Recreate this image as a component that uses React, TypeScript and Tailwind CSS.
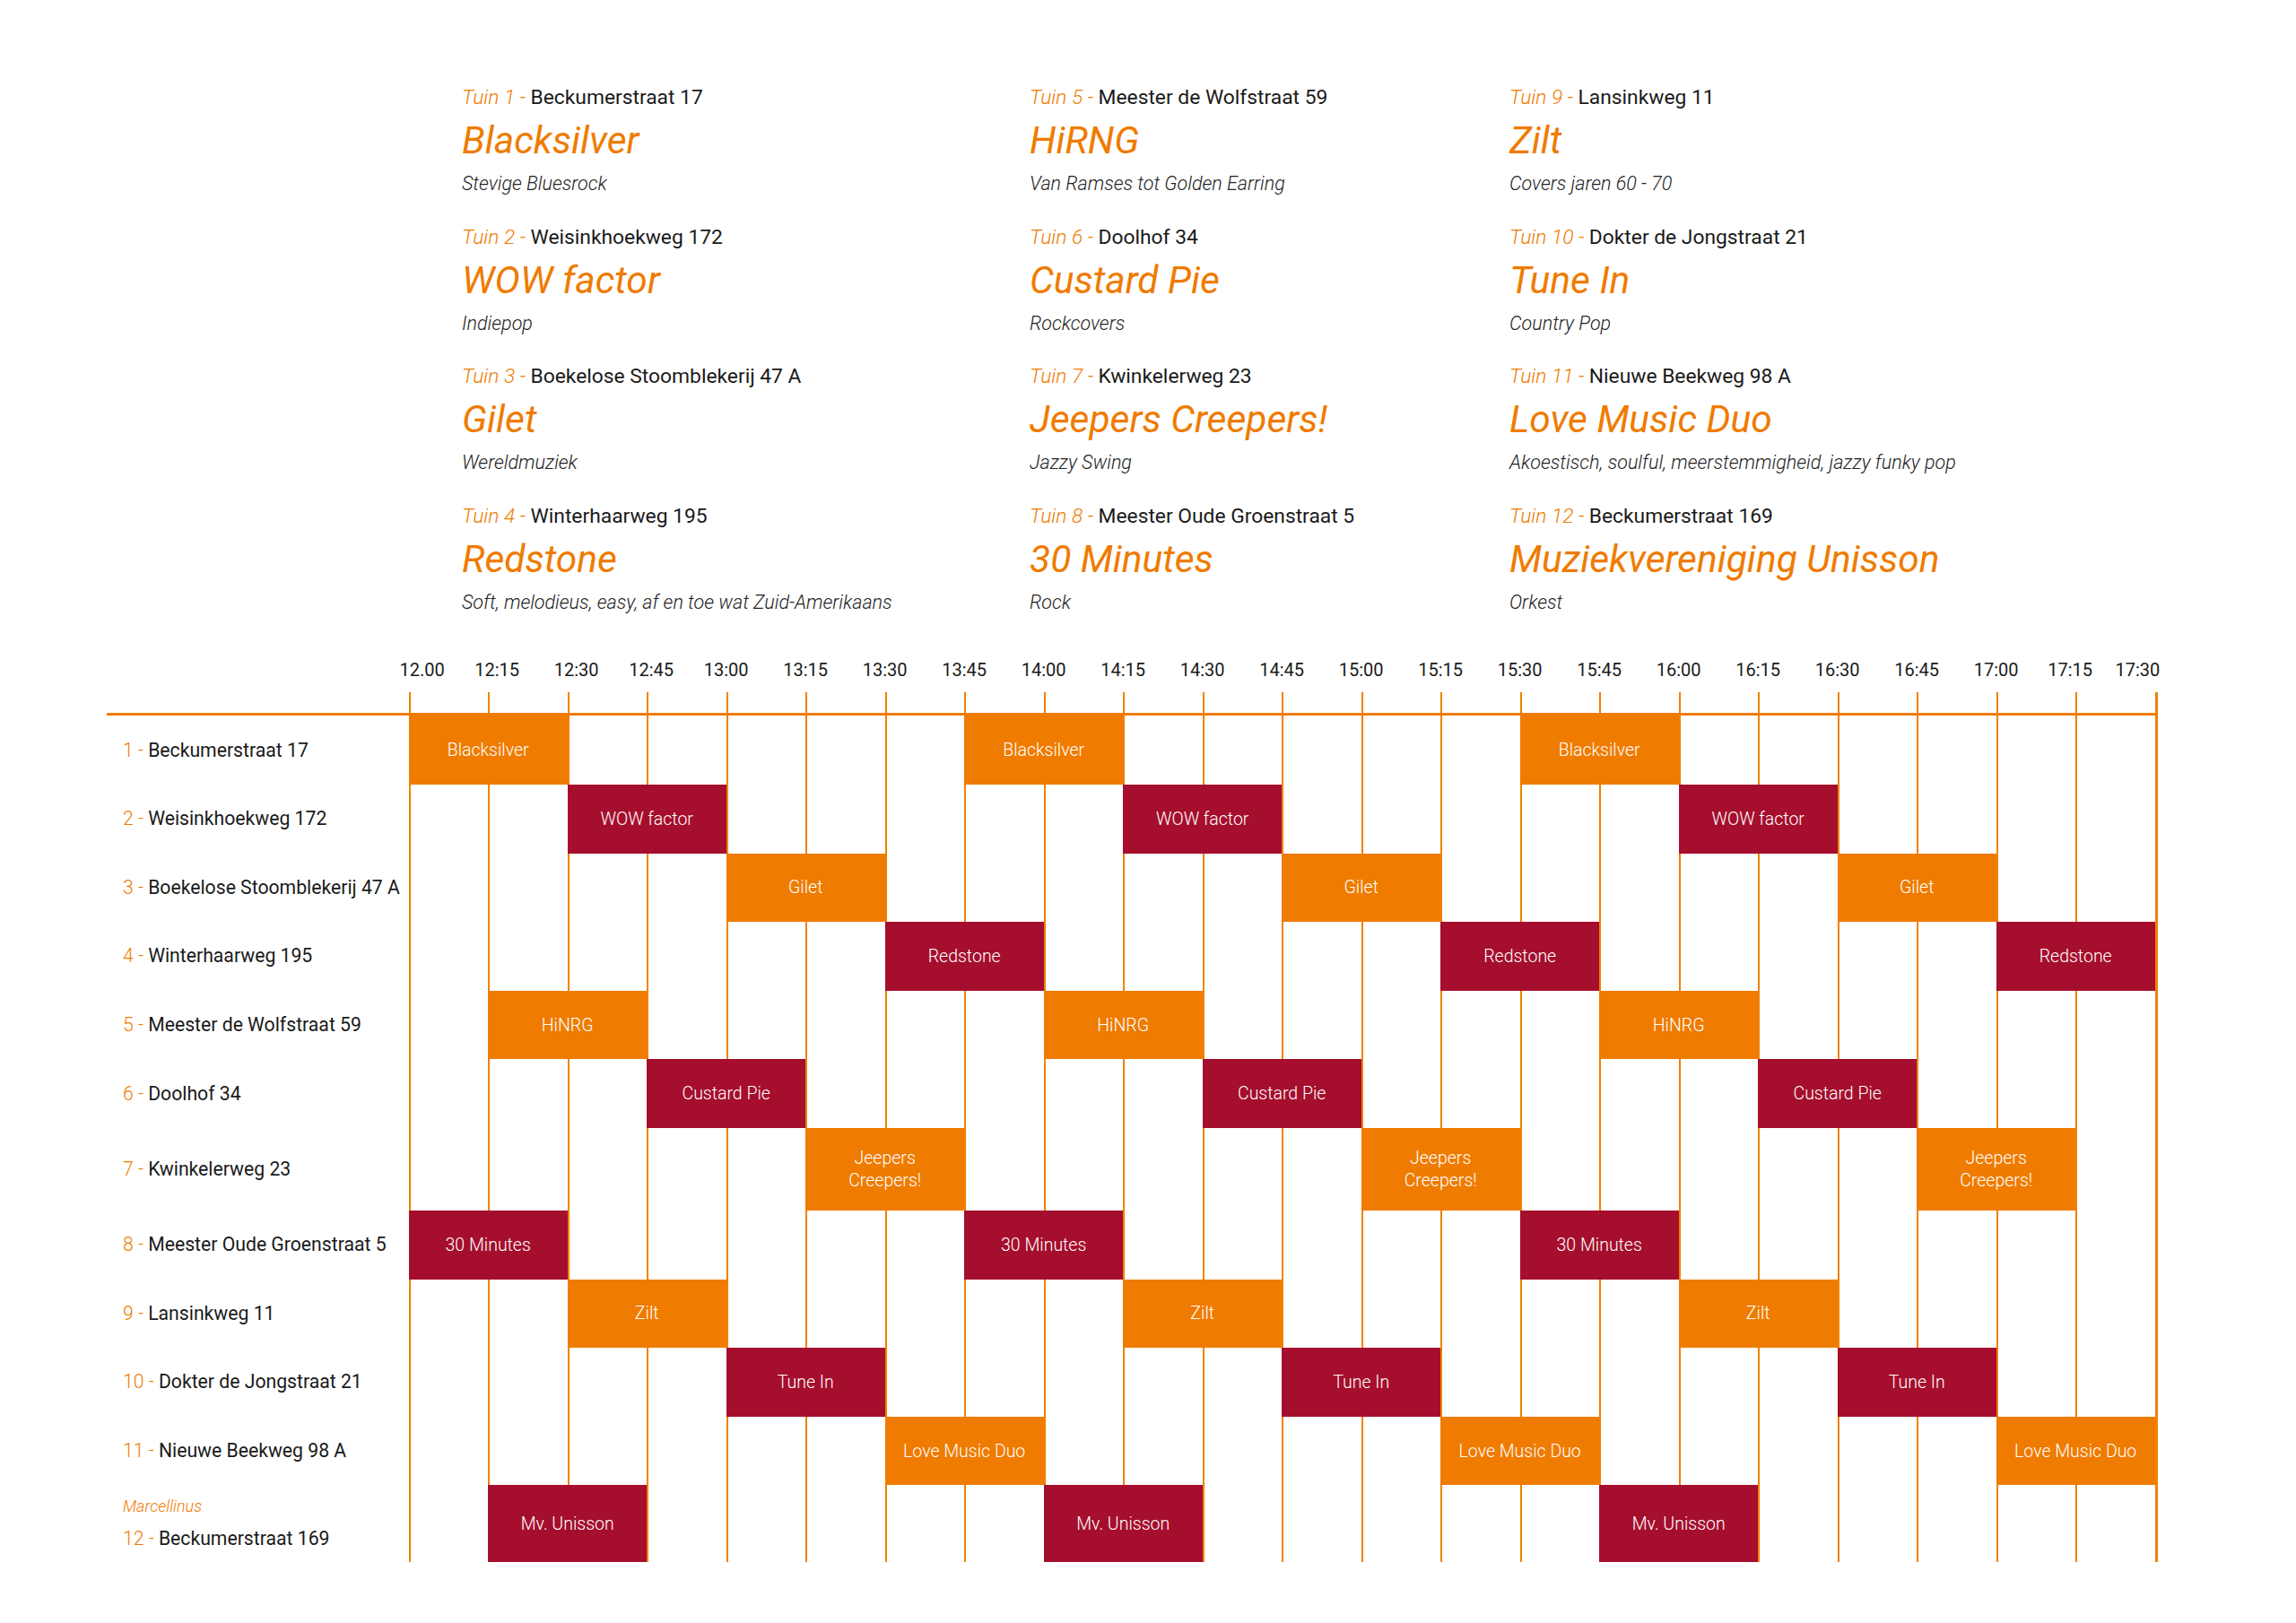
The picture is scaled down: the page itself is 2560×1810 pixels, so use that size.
import React from "react";

const ORANGE = "#EF7B00";

type Entry = { tuin: number; addr: string; name: string; genre: string };

const COLUMNS: Entry[][] = [
  [
    { tuin: 1, addr: "Beckumerstraat 17", name: "Blacksilver", genre: "Stevige Bluesrock" },
    { tuin: 2, addr: "Weisinkhoekweg 172", name: "WOW factor", genre: "Indiepop" },
    { tuin: 3, addr: "Boekelose Stoomblekerij 47 A", name: "Gilet", genre: "Wereldmuziek" },
    { tuin: 4, addr: "Winterhaarweg 195", name: "Redstone", genre: "Soft, melodieus, easy, af en toe wat Zuid-Amerikaans" },
  ],
  [
    { tuin: 5, addr: "Meester de Wolfstraat 59", name: "HiRNG", genre: "Van Ramses tot Golden Earring" },
    { tuin: 6, addr: "Doolhof 34", name: "Custard Pie", genre: "Rockcovers" },
    { tuin: 7, addr: "Kwinkelerweg 23", name: "Jeepers Creepers!", genre: "Jazzy Swing" },
    { tuin: 8, addr: "Meester Oude Groenstraat 5", name: "30 Minutes", genre: "Rock" },
  ],
  [
    { tuin: 9, addr: "Lansinkweg 11", name: "Zilt", genre: "Covers jaren 60 - 70" },
    { tuin: 10, addr: "Dokter de Jongstraat 21", name: "Tune In", genre: "Country Pop" },
    { tuin: 11, addr: "Nieuwe Beekweg 98 A", name: "Love Music Duo", genre: "Akoestisch, soulful, meerstemmigheid, jazzy funky pop" },
    { tuin: 12, addr: "Beckumerstraat 169", name: "Muziekvereniging Unisson", genre: "Orkest" },
  ],
];

const COL_WIDTHS = ["w-[633px]", "w-[535px]", "flex-1"];

type Row = { n: number; addr: string; name: string; red: boolean; starts: number[]; sub?: string; h: string };

const ROWS: Row[] = [
  { n: 1, addr: "Beckumerstraat 17", name: "Blacksilver", red: false, starts: [0, 7, 14], h: "h-[76.6px]" },
  { n: 2, addr: "Weisinkhoekweg 172", name: "WOW factor", red: true, starts: [2, 9, 16], h: "h-[76.6px]" },
  { n: 3, addr: "Boekelose Stoomblekerij 47 A", name: "Gilet", red: false, starts: [4, 11, 18], h: "h-[76.6px]" },
  { n: 4, addr: "Winterhaarweg 195", name: "Redstone", red: true, starts: [6, 13, 20], h: "h-[76.6px]" },
  { n: 5, addr: "Meester de Wolfstraat 59", name: "HiNRG", red: false, starts: [1, 8, 15], h: "h-[76.6px]" },
  { n: 6, addr: "Doolhof 34", name: "Custard Pie", red: true, starts: [3, 10, 17], h: "h-[76.6px]" },
  { n: 7, addr: "Kwinkelerweg 23", name: "Jeepers\nCreepers!", red: false, starts: [5, 12, 19], h: "h-[92px]" },
  { n: 8, addr: "Meester Oude Groenstraat 5", name: "30 Minutes", red: true, starts: [0, 7, 14], h: "h-[76.6px]" },
  { n: 9, addr: "Lansinkweg 11", name: "Zilt", red: false, starts: [2, 9, 16], h: "h-[76.6px]" },
  { n: 10, addr: "Dokter de Jongstraat 21", name: "Tune In", red: true, starts: [4, 11, 18], h: "h-[76.6px]" },
  { n: 11, addr: "Nieuwe Beekweg 98 A", name: "Love Music Duo", red: false, starts: [6, 13, 20], h: "h-[76.6px]" },
  { n: 12, addr: "Beckumerstraat 169", name: "Mv. Unisson", red: true, starts: [1, 8, 15], sub: "Marcellinus", h: "h-[86px]" },
];

const TIMES = [
  "12.00", "12:15", "12:30", "12:45", "13:00", "13:15", "13:30", "13:45", "14:00", "14:15", "14:30", "14:45",
  "15:00", "15:15", "15:30", "15:45", "16:00", "16:15", "16:30", "16:45", "17:00", "17:15", "17:30",
];

// small hand nudges so the labels sit where the print version has them
const TIME_NUDGE: Record<number, string> = {
  0: "pl-[30px]",
  1: "pl-[20px]",
  2: "pl-[20px]",
  3: "pl-[10px]",
  21: "pr-[12px]",
};

function EntryBlock({ e }: { e: Entry }) {
  return (
    <div className="flex flex-col">
      <p className="text-[22.8px] leading-[28px] text-[#1a1a1a] whitespace-nowrap">
        <span className="italic font-light text-[#EF7B00]">Tuin {e.tuin} - </span>
        {e.addr}
      </p>
      <p className="text-[42.5px] leading-[67px] italic text-[#EF7B00] whitespace-nowrap">{e.name}</p>
      <p className="text-[21.5px] leading-[30px] italic font-light text-[#222] whitespace-nowrap">{e.genre}</p>
    </div>
  );
}

function ScheduleRow({ row }: { row: Row }) {
  const cells: React.ReactNode[] = [];
  for (let i = 0; i < 22; i++) {
    if (row.starts.includes(i)) {
      cells.push(
        <div
          key={i}
          className={`col-span-2 flex items-center justify-center text-center whitespace-pre-line text-[19.5px] leading-[25px] font-light text-white ${
            row.red ? "bg-[#A50E2D]" : "bg-[#EF7B00]"
          }`}
        >
          {row.name}
        </div>
      );
      i++;
    } else {
      cells.push(<div key={i} className="border-l-2 border-[#F08200]" />);
    }
  }
  return (
    <div className={`flex ${row.h}`}>
      <div className="flex w-[336.7px] shrink-0 flex-col justify-center pl-[18px]">
        {row.sub && <p className="text-[18px] leading-[24px] italic font-light text-[#EF7B00] mb-[10px]">{row.sub}</p>}
        <p className="text-[21.2px] leading-[28px] text-[#1a1a1a] whitespace-nowrap">
          <span className="text-[#EF7B00] font-light">{row.n} - </span>
          {row.addr}
        </p>
      </div>
      <div className="grid w-[1950px] grid-cols-[repeat(22,88.5px)] border-r-[3px] border-[#F08200]">{cells}</div>
    </div>
  );
}

export default function App() {
  return (
    <div className="min-h-[1810px] w-[2560px] bg-white font-['Roboto','Liberation_Sans',sans-serif]" style={{ color: "#1a1a1a" }}>
      {/* line-up */}
      <div className="flex pl-[515px] pt-[95px]">
        {COLUMNS.map((col, ci) => (
          <div key={ci} className={`flex flex-col gap-[30.6px] ${COL_WIDTHS[ci]}`}>
            {col.map((e) => (
              <EntryBlock key={e.tuin} e={e} />
            ))}
          </div>
        ))}
      </div>

      {/* timetable */}
      <div className="ml-[119px] mt-[48.6px] w-[2290px]">
        <div className="flex">
          <div className="w-[292.45px] shrink-0" />
          <div className="grid grid-cols-[repeat(23,88.5px)]">
            {TIMES.map((t, i) => (
              <div
                key={t}
                className={`text-[20px] leading-[24px] text-[#1a1a1a] whitespace-nowrap ${
                  i === 22 ? "text-right pr-[42px]" : "text-center"
                } ${TIME_NUDGE[i] ?? ""}`}
              >
                {t}
              </div>
            ))}
          </div>
        </div>

        <div className="mt-[13px] flex h-[23px]">
          <div className="w-[336.7px] shrink-0" />
          <div className="grid w-[1950px] grid-cols-[repeat(22,88.5px)] border-r-[3px] border-[#F08200]">
            {Array.from({ length: 22 }).map((_, i) => (
              <div key={i} className="border-l-2 border-[#F08200]" />
            ))}
          </div>
        </div>
        <div className="h-[3px] w-[2286.7px]" style={{ backgroundColor: ORANGE }} />

        {ROWS.map((r) => (
          <ScheduleRow key={r.n} row={r} />
        ))}
      </div>
    </div>
  );
}
